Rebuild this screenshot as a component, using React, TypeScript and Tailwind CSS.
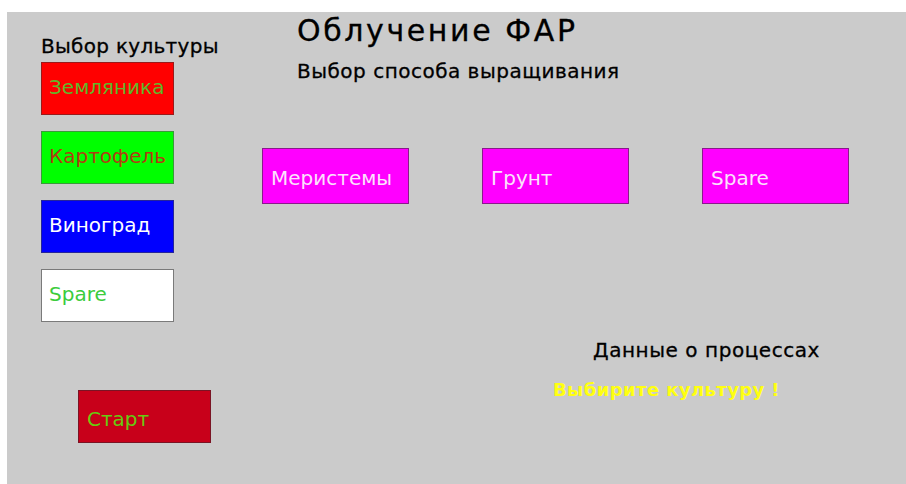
import React from 'react';

type Tile = { label: string; box: string; text: string };

const crops: Tile[] = [
  { label: 'Земляника', box: 'bg-[#ff0000] border-[#9a1a1a]', text: 'text-[#5fb82a]' },
  { label: 'Картофель', box: 'bg-[#00ff00] border-[#3a9a3a]', text: 'text-[#b23a12]' },
  { label: 'Виноград', box: 'bg-[#0000ff] border-[#25259a]', text: 'text-white' },
  { label: 'Spare', box: 'bg-white border-[#7a7a7a]', text: 'text-[#3ccc3c]' },
];

const methods = ['Меристемы', 'Грунт', 'Spare'];

// slightly heavier strokes for panel text
const heavy = '[-webkit-text-stroke:0.3px_currentColor]';

const App: React.FC = () => {
  return (
    <div className="w-[906px] h-[484px] bg-white pt-[12px] pl-[7px] overflow-hidden font-['DejaVu_Sans',sans-serif]">
      <div className="w-[899px] h-[472px] bg-[#cbcbcb] flex">
        {/* crop selection column + start button */}
        <div className="w-[248px] shrink-0 flex flex-col pl-[34px] pt-[22px]">
          <h2 className={`text-[20px] leading-[24px] tracking-[0.3px] text-black whitespace-nowrap ${heavy}`}>Выбор культуры</h2>
          <div className="flex flex-col gap-[16px] mt-[4px]">
            {crops.map((c) => (
              <div
                key={c.label}
                className={`w-[133px] h-[53px] border flex items-center pl-[7px] pb-[3px] text-[20px] ${c.box} ${c.text}`}
              >
                {c.label}
              </div>
            ))}
          </div>
          <div className="mt-[68px] ml-[37px] w-[133px] h-[53px] border border-[#7a1424] bg-[#c8001a] text-[#66cc11] flex items-center pl-[8px] pt-[5px] text-[20px]">
            Старт
          </div>
        </div>

        {/* growing method + process info */}
        <div className="flex-1 flex flex-col">
          <div className="pl-[42px] pt-[1px]">
            <h1 className={`text-[30px] leading-[36px] tracking-[2.6px] text-black whitespace-nowrap ${heavy}`}>Облучение ФАР</h1>
            <h3 className={`text-[20px] leading-[24px] tracking-[0.5px] text-black mt-[10px] whitespace-nowrap ${heavy}`}>
              Выбор способа выращивания
            </h3>
          </div>
          <div className="flex gap-[73px] pl-[7px] mt-[65px]">
            {methods.map((m) => (
              <div
                key={m}
                className="w-[147px] h-[56px] border border-[#8a1a8a] bg-[#ff00ff] text-[#fbe2fb] flex items-center pl-[8px] pt-[4px] text-[20px]"
              >
                {m}
              </div>
            ))}
          </div>
          <div className={`pl-[338px] mt-[134px] text-[20px] leading-[24px] tracking-[0.55px] text-black whitespace-nowrap ${heavy}`}>
            Данные о процессах
          </div>
          <div className="pl-[298px] mt-[17px] text-[18px] leading-[22px] tracking-[0.4px] font-bold text-[#ffff10] whitespace-nowrap">
            Выбирите культуру !
          </div>
        </div>
      </div>
    </div>
  );
};

export default App;
